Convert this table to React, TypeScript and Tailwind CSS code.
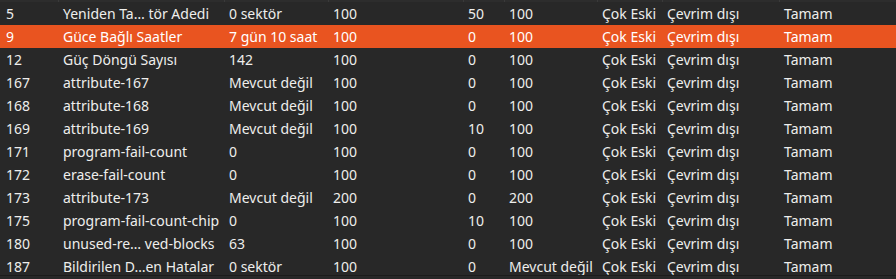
const rows = [
  ["5", "Yeniden Ta…  tör Adedi", "0 sektör", "100", "50", "100", "Çok Eski", "Çevrim dışı", "Tamam"],
  ["9", "Güce Bağlı Saatler", "7 gün 10 saat", "100", "0", "100", "Çok Eski", "Çevrim dışı", "Tamam"],
  ["12", "Güç Döngü Sayısı", "142", "100", "0", "100", "Çok Eski", "Çevrim dışı", "Tamam"],
  ["167", "attribute-167", "Mevcut değil", "100", "0", "100", "Çok Eski", "Çevrim dışı", "Tamam"],
  ["168", "attribute-168", "Mevcut değil", "100", "0", "100", "Çok Eski", "Çevrim dışı", "Tamam"],
  ["169", "attribute-169", "Mevcut değil", "100", "10", "100", "Çok Eski", "Çevrim dışı", "Tamam"],
  ["171", "program-fail-count", "0", "100", "0", "100", "Çok Eski", "Çevrim dışı", "Tamam"],
  ["172", "erase-fail-count", "0", "100", "0", "100", "Çok Eski", "Çevrim dışı", "Tamam"],
  ["173", "attribute-173", "Mevcut değil", "200", "0", "200", "Çok Eski", "Çevrim dışı", "Tamam"],
  ["175", "program-fail-count-chip", "0", "100", "10", "100", "Çok Eski", "Çevrim dışı", "Tamam"],
  ["180", "unused-re… ved-blocks", "63", "100", "0", "100", "Çok Eski", "Çevrim dışı", "Tamam"],
  ["187", "Bildirilen D…en Hatalar", "0 sektör", "100", "0", "Mevcut değil", "Çok Eski", "Çevrim dışı", "Tamam"],
];

const cols = "grid grid-cols-[58px_166px_104px_135px_41px_93px_65px_117px_1fr]";

export default function App() {
  return (
    <div
      className="w-[896px] h-[279px] overflow-hidden bg-[#282828] text-[#eeeeec] text-[14px]"
      style={{ fontFamily: '"Noto Sans", "DejaVu Sans", sans-serif' }}
    >
      {/* header, scrolled almost out of view */}
      <div className={`${cols} h-[2px] bg-[#2d2d2d]`}>
        {Array.from({ length: 9 }).map((_, i) => (
          <div key={i} className={i > 0 ? "border-l border-[#3a3a3a]" : ""} />
        ))}
      </div>
      <div className="h-[274px] overflow-hidden border-b border-[#1c1c1c]">
        {rows.map((r, i) => (
          <div
            key={r[0]}
            className={`${cols} h-[23px] ${i === 1 ? "bg-[#e95420] text-white" : ""}`}
          >
            {r.map((c, j) => (
              <div key={j} className={`whitespace-nowrap pt-[1px] leading-[22px] ${j === 0 ? "pl-[6px]" : "pl-[5px]"}`}>
                {c}
              </div>
            ))}
          </div>
        ))}
      </div>
    </div>
  );
}
